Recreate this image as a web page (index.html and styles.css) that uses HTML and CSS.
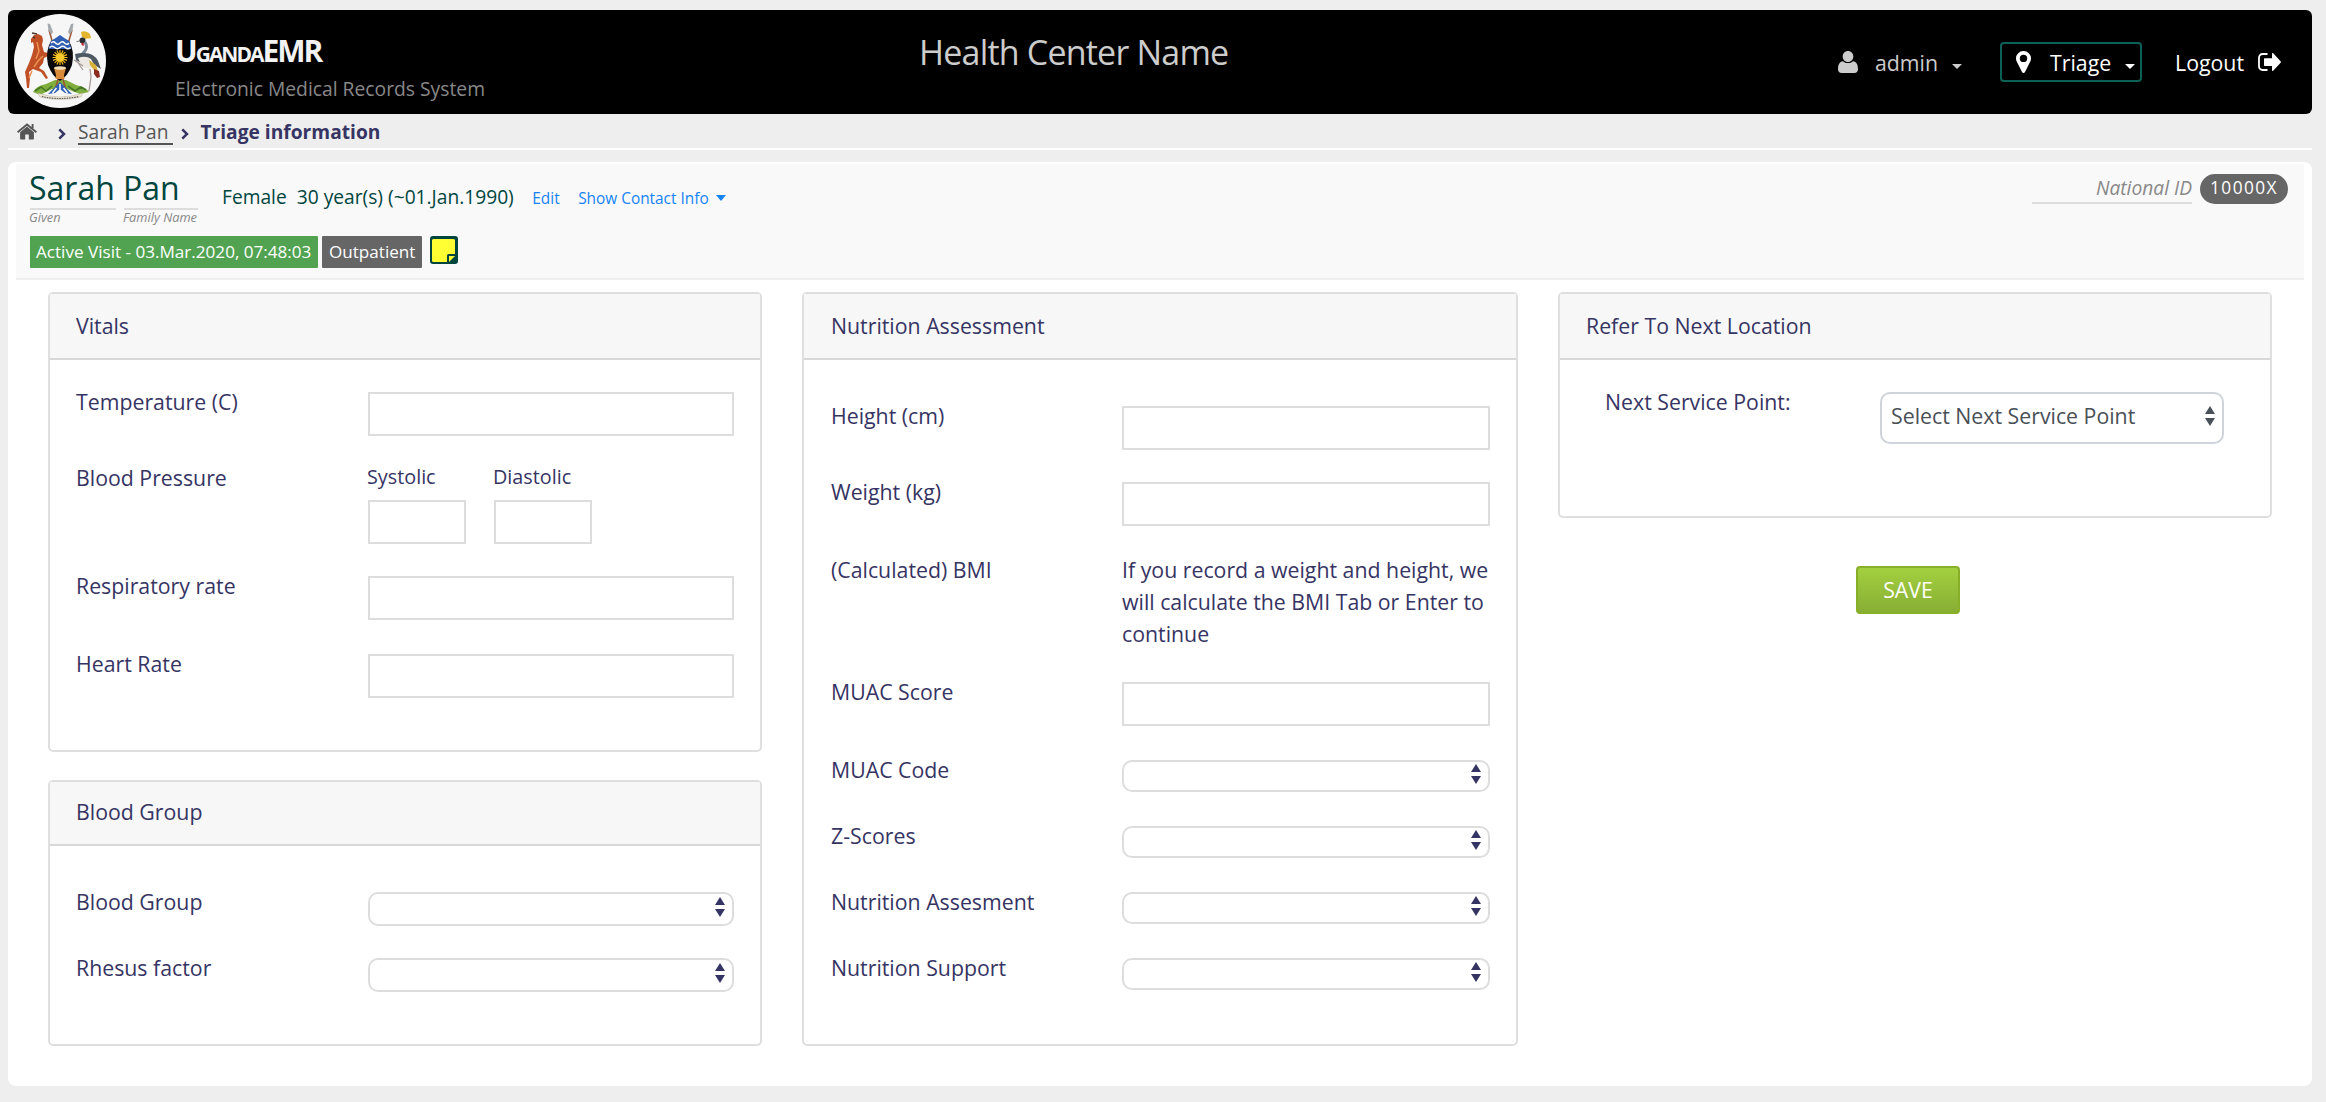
FILE: index.html
```html
<!DOCTYPE html>
<html lang="en">
<head>
<meta charset="utf-8">
<title>UgandaEMR - Triage</title>
<link rel="stylesheet" href="styles.css">
</head>
<body>
<header class="topbar">
  <svg class="crest" viewBox="0 0 92 94">
    <ellipse cx="46" cy="47" rx="46" ry="47" fill="#f6f6f6"/>
    <path d="M19 78q3-6 13-8l9-4h11l10 5q10 2 13 7l-9 2-13-5-7 1-8-1-12 6z" fill="#7fae3c"/>
    <path d="M21 77l6-4 5 4 6-5M54 72l7 5 6-4 5 3" stroke="#47762a" stroke-width="1.600" fill="none"/>
    <path d="M35 16l17 60M58 16L41 76" stroke="#9c5436" stroke-width="1.500"/>
    <path d="M33.500 9.500l2.500.500 3 8-1.500 2.500-3-4zM59.500 9.500l-2.500.500-3 8 1.500 2.500 3-4z" fill="#a4a9ad"/>
    <path d="M17 25l3-4 4-1 4 2 1 4-1 5 2 7 4 1 2-1v3l-6 3-1 5-4 5 5 3 4 7-2 1-5-7-8-3-4 3 1 6-1 10h-2l-1-10-1-6 4-9 3-8 2-8-1-5-2 1z" fill="#c04f26"/>
    <path d="M23 28l2 9-3 8M20 53l4-6 5-5M18 57l-3 7" stroke="#ec9150" stroke-width="1.500" fill="none"/>
    <path d="M18 19l5 1M19 23l2 1" stroke="#4b3a2c" stroke-width="1.400"/>
    <path d="M67 18q5-2 9 2l1 4-6 1-3-2z" fill="#e3b52e"/>
    <path d="M62.500 27.500l3-.500" stroke="#777" stroke-width="1"/>
    <circle cx="68.500" cy="26.500" r="3" fill="#2a2d31"/>
    <path d="M67.500 28.500l2.500 1-.5 2.500-2-1z" fill="#c4202a"/>
    <path d="M71 28q3 5 0 9t-6 6" stroke="#7a8795" stroke-width="3" fill="none"/>
    <path d="M61 40q4-1 9-1 10 0 14 8l3 8-5-3-8-5-7 2-5-3z" fill="#4d5862"/>
    <path d="M64 44q8-3 13 1l4 7-5 3-8-2z" fill="#ece9e2"/>
    <path d="M75 46l7 5 2 6-4-1-4-5z" fill="#d8b03a"/>
    <path d="M80 55l5 2 1 6-3 1-3-4z" fill="#8a2b20"/>
    <path d="M76 55l1 8-2 14M69 52l-9-6M62 46l7 10" stroke="#a79c96" stroke-width="1.300" fill="none"/>
    <path d="M46 22q4 3 9 5 6 10 3 24-4 11-12 16-8-5-12-16-3-14 3-24 5-2 9-5z" fill="#0a0a0a"/>
    <path d="M46 21q4 3 9 6l2.500 8h-23L37 27q5-3 9-6z" fill="#2f5fb3"/>
    <path d="M37 29q2.200-2.500 4.500 0t4.500 0 4.500 0 4.500 0M35.500 33.500q2.600-2.500 5.200 0t5.300 0 5.300 0 5.200 0" stroke="#fff" stroke-width="1.500" fill="none"/>
    <g stroke="#f5b81c" stroke-width="1.200"><path d="M46 36v15M38.500 43.500h15M40.700 38.200l10.600 10.600M51.300 38.200L40.700 48.800M43 36.600l6 13.800M49 36.600l-6 13.800M39 40.600l14 5.800M53 40.600l-14 5.800"/></g>
    <circle cx="46" cy="43.500" r="4.200" fill="#f8c92e"/>
    <path d="M40 54q6-2 12 0l-2 7 .5 4h-9l.5-4z" fill="#d98b3a"/>
    <ellipse cx="46" cy="54" rx="6" ry="1.800" fill="#f1dfba"/>
    <path d="M46 68l-12 12 7-1 5-4 5 4 7 1z" fill="#2f5fb3"/>
    <path d="M46 70v8M42.500 74l-4 5M49.500 74l4 5" stroke="#fff" stroke-width="1.500"/>
    <path d="M24 79q22 8 45 0l-2 4q-21 5-41 0z" fill="#ece6d2" stroke="#b5ae9c" stroke-width=".5"/>
    <path d="M28 82.500q17 4 37 0" stroke="#555" stroke-width="1.100" stroke-dasharray="1.500 1" fill="none"/>
  </svg>
  <div class="brand">
    <div class="brand-name">UgandaEMR</div>
    <div class="brand-sub">Electronic Medical Records System</div>
  </div>
  <h1 class="center-name">Health Center Name</h1>
  <nav class="user-nav">
    <a class="nav-item nav-user">
      <svg class="ico-user" viewBox="0 0 20 22"><path d="M10 0c3 0 5.300 2.400 5.300 5.500S13 11 10 11 4.700 8.600 4.700 5.500 7 0 10 0zM5 10.200c1.300 1.200 3 1.900 5 1.900s3.700-.7 5-1.900c3.500.3 5 3.500 5 8 0 2.400-1.400 3.800-3.700 3.800H3.700C1.400 22 0 20.600 0 18.200c0-4.500 1.500-7.700 5-8z" fill="currentColor"/></svg>
      <span class="user-label">admin</span><i class="caret"></i>
    </a>
    <a class="nav-item nav-place">
      <svg class="ico-pin" viewBox="0 0 15 22"><path fill-rule="evenodd" d="M7.500 0A7.400 7.400 0 0 1 15 7.500c0 1-.2 2-.6 2.800L9 21c-.6 1.300-2.400 1.300-3 0L.6 10.300C.2 9.500 0 8.500 0 7.500A7.400 7.400 0 0 1 7.500 0zm0 3.700a3.700 3.700 0 1 0 0 7.400 3.700 3.700 0 0 0 0-7.400z" fill="currentColor"/></svg>
      <span class="place-label">Triage</span><i class="caret"></i>
    </a>
    <a class="nav-item nav-logout"><span>Logout</span>
      <svg class="ico-out" viewBox="0 0 23 19"><path d="M9.500 1H4.500A3.500 3.500 0 0 0 1 4.500v9A3.500 3.500 0 0 0 4.500 17h5" fill="none" stroke="currentColor" stroke-width="1.800"/><path d="M14 .8c0-.8.700-1 1.200-.500l7.400 8c.4.500.4 1 0 1.500l-7.400 8c-.5.500-1.200.300-1.200-.500v-4.300H7c-.6 0-1-.4-1-1V6.200c0-.6.400-1 1-1h7z" fill="currentColor"/></svg>
    </a>
  </nav>
</header>

<nav class="crumbs">
  <svg class="ico-home" viewBox="0 0 20 17"><path d="M10 3.600l6.900 5.700v6.400c0 .5-.3.800-.8.800h-4.300v-5H8.200v5H3.900c-.5 0-.8-.3-.8-.8V9.300z" fill="#555"/><path d="M.6 9.200L10 1.400l9.400 7.800M15.600 1v4" fill="none" stroke="#555" stroke-width="1.900"/></svg>
  <svg class="ico-chev" viewBox="0 0 8 12"><path d="M1.300 1.300L6 6l-4.700 4.700" fill="none" stroke="#363463" stroke-width="2.500"/></svg>
  <a class="crumb-link">Sarah Pan&nbsp;</a>
  <svg class="ico-chev second" viewBox="0 0 8 12"><path d="M1.300 1.300L6 6l-4.700 4.700" fill="none" stroke="#363463" stroke-width="2.500"/></svg>
  <strong class="crumb-current">Triage information</strong>
</nav>

<main class="content">
  <section class="patient">
    <div class="patient-top">
      <div class="name given"><span class="name-value">Sarah</span><em>Given</em></div>
      <div class="name family"><span class="name-value">Pan</span><em>Family Name</em></div>
      <div class="demographics">
        <span class="gender">Female</span><span class="age">30 year(s) (~01.Jan.1990)</span><a class="edit">Edit</a><a class="contact">Show Contact Info</a><i class="caret-blue"></i>
      </div>
      <div class="identifiers"><em class="nid">National ID</em><span class="pid">10000X</span></div>
    </div>
    <div class="tags">
      <span class="tag visit">Active Visit - 03.Mar.2020, 07:48:03</span>
      <span class="tag type">Outpatient</span>
      <svg class="ico-note" viewBox="0 0 28 28"><rect width="28" height="28" rx="3" fill="#00463f"/><path d="M3.500 3h20a1.500 1.500 0 0 1 1.500 1.500V18h-6.500a1.500 1.500 0 0 0-1.500 1.500V26H3.500A1.500 1.500 0 0 1 2 24.500v-20A1.500 1.500 0 0 1 3.500 3z" fill="#ff3"/><path d="M19 20h6l-6 6z" fill="#ff3"/></svg>
    </div>
  </section>

  <div class="columns">
    <div class="column">
      <section class="card vitals">
        <h2>Vitals</h2>
        <div class="row"><label>Temperature (C)</label><input class="text"></div>
        <div class="row bp"><label>Blood Pressure</label>
          <div class="pair"><span>Systolic</span><input class="text"></div>
          <div class="pair"><span>Diastolic</span><input class="text"></div>
        </div>
        <div class="row resp"><label>Respiratory rate</label><input class="text"></div>
        <div class="row"><label>Heart Rate</label><input class="text"></div>
      </section>
      <section class="card blood">
        <h2>Blood Group</h2>
        <div class="row pick"><label>Blood Group</label><div class="select"><i class="arrows"></i></div></div>
        <div class="row pick"><label>Rhesus factor</label><div class="select"><i class="arrows"></i></div></div>
      </section>
    </div>

    <div class="column">
      <section class="card nutrition">
        <h2>Nutrition Assessment</h2>
        <div class="row height"><label>Height (cm)</label><input class="text"></div>
        <div class="row weight"><label>Weight (kg)</label><input class="text"></div>
        <div class="row bmi"><label>(Calculated) BMI</label><p>If you record a weight and height, we will calculate the BMI Tab or Enter to continue</p></div>
        <div class="row"><label>MUAC Score</label><input class="text"></div>
        <div class="row pick"><label>MUAC Code</label><div class="select"><i class="arrows"></i></div></div>
        <div class="row pick"><label>Z-Scores</label><div class="select"><i class="arrows"></i></div></div>
        <div class="row pick"><label>Nutrition Assesment</label><div class="select"><i class="arrows"></i></div></div>
        <div class="row pick"><label>Nutrition Support</label><div class="select"><i class="arrows"></i></div></div>
      </section>
    </div>

    <div class="column">
      <section class="card refer">
        <h2>Refer To Next Location</h2>
        <div class="row"><label>Next Service Point:</label><div class="select big"><span>Select Next Service Point</span><i class="arrows"></i></div></div>
      </section>
      <button class="save">SAVE</button>
    </div>
  </div>
</main>
</body>
</html>
```
FILE: styles.css
```css
* { box-sizing: border-box; }
body {
  margin: 0;
  padding: 10px 14px 16px 8px;
  height: 1102px;
  background: #eee;
  color: #363463;
  font: 21.3px/32px "Open Sans", sans-serif;
}
svg { display: block; flex: none; }

/* Top bar */
.topbar {
  display: flex;
  align-items: flex-start;
  height: 104px;
  background: #000;
  border-radius: 6px;
  padding-left: 6px;
}
.crest { width: 92px; height: 94px; margin-top: 4px; }
.brand { width: 743px; padding: 23px 0 0 69px; white-space: nowrap; }
.brand-name {
  font: bold 30px/36px "Open Sans", sans-serif;
  font-variant: small-caps;
  color: #f2f2f2;
  letter-spacing: -2px;
}
.brand-sub { font-size: 19.3px; line-height: 26px; color: #888; margin-top: 7px; }
.center-name {
  margin: 19px 0 0 70px;
  font: 500 34px/46px "Open Sans", sans-serif;
  letter-spacing: -.8px;
  color: #ccc;
  white-space: nowrap;
}
.user-nav { display: flex; margin: 32px 31px 0 auto; color: #fff; }
.nav-item { display: flex; align-items: center; height: 40px; }
.nav-item span { padding-top: 2px; }
.nav-user { color: #ccc; margin-right: 38px; }
.ico-user { width: 20px; height: 22px; margin-right: 17px; }
.ico-pin { width: 15px; height: 22px; margin-right: 19px; }
.ico-out { width: 23px; height: 19px; margin-left: 14px; }
.caret {
  border: 5px solid transparent;
  border-top-color: currentColor;
  border-bottom: 0;
  margin: 9px 0 0 14px;
}
.nav-place {
  width: 142px;
  border: 2px solid #0b6158;
  border-radius: 4px;
  padding-left: 14px;
  margin-right: 33px;
}

/* Breadcrumbs */
.crumbs {
  display: flex;
  align-items: center;
  height: 36px;
  border-bottom: 2px solid #fff;
  padding: 2px 0 0 9px;
  font-size: 19.2px;
}
.ico-home { width: 20px; height: 17px; margin-top: -2px; }
.ico-chev { width: 8px; height: 12px; margin: 4px 12px 0 21px; }
.ico-chev.second { margin: 4px 11px 0 8px; }
.crumb-link { color: #555; border-bottom: 2px solid #555; line-height: 22px; margin-top: 2px; }

/* Patient header */
.content {
  height: 924px;
  margin-top: 12px;
  padding: 2px 8px 0;
  background: #fff;
  border-radius: 8px;
}
.patient {
  height: 116px;
  background: #f9f9f9;
  border-bottom: 2px solid #eee;
  padding-left: 14px;
  color: #00463f;
}
.patient-top { display: flex; height: 72px; white-space: nowrap; }
.name { display: flex; flex-direction: column; }
.given { width: 86px; margin-right: 8px; }
.family { width: 74px; }
.name-value { font-size: 32px; line-height: 48px; height: 46px; border-bottom: 2px solid #ddd; text-indent: -1px; }
.name em { font-size: 12.8px; line-height: 15px; color: #888; text-indent: -1px; }
.demographics { display: flex; align-items: baseline; height: 40px; margin: 17px 0 0 24px; line-height: 32px; font-size: 19.2px; }
.age { margin-left: 10px; }
.edit, .contact { font-size: 15.4px; color: #1583f6; margin-left: 18.500px; }
.caret-blue { border: 5.500px solid transparent; border-top: 6px solid #1583f6; border-bottom: 0; margin-left: 7px; transform: translateY(-3px); }
.identifiers { display: flex; align-items: flex-start; margin: 10px 16px 0 auto; }
.nid { width: 160px; height: 30px; line-height: 27px; border-bottom: 2px solid #ddd; text-align: right; font-size: 19.2px; color: #888; }
.pid {
  width: 88px;
  height: 30px;
  margin-left: 8px;
  border-radius: 15px;
  background: #666;
  color: #fff;
  font-size: 17.300px;
  line-height: 28px;
  letter-spacing: 1.400px;
  text-align: center;
}
.tags { display: flex; gap: 4px; }
.tag { height: 32px; line-height: 31px; padding: 0 6px; color: #fff; font-size: 17.100px; white-space: nowrap; border-radius: 1px; }
.visit { width: 288px; background: #51a351; }
.type { width: 100px; background: #666; padding-left: 7px; }
.ico-note { width: 28px; height: 28px; margin-left: 4px; }

/* Form cards */
.columns { display: flex; gap: 40px; padding: 12px 32px 0; }
.column { width: 714px; }
.column:nth-child(2) { width: 716px; }
.card { border: 2px solid #dfdfdf; border-radius: 5px; }
.card h2 {
  margin: 0;
  height: 66px;
  padding: 16px 26px 0;
  background: #f7f7f7;
  border-bottom: 2px solid #d8d8d8;
  font: inherit;
}
.row { display: flex; height: 44px; margin: 34px 26px 0; }
.row label { width: 292px; line-height: 20px; white-space: nowrap; }
.text { width: 366px; height: 44px; border: 2px solid #ddd; background: #fff; padding: 0; }
.select { position: relative; width: 366px; height: 34px; border: 2px solid #ddd; border-radius: 10px; }
.arrows { position: absolute; right: 7px; top: 3px; width: 10px; height: 20px; }
.arrows::before, .arrows::after { content: ""; position: absolute; left: 0; border: 5px solid transparent; }
.arrows::before { top: 0; border-top: 0; border-bottom: 8px solid currentColor; }
.arrows::after { top: 12px; border-bottom: 0; border-top: 8px solid currentColor; }

.vitals { height: 460px; margin-bottom: 28px; }
.vitals h2 + .row { margin-top: 32px; }
.vitals .bp { height: 76px; margin-top: 32px; }
.pair { width: 98px; margin-right: 28px; }
.pair span { display: block; font-size: 19.8px; line-height: 18px; height: 32px; text-indent: -1px; }
.pair .text { display: block; width: 98px; }
.vitals .resp { margin-top: 32px; }

.row.pick { height: 34px; margin-top: 32px; }
.blood { height: 266px; }
.blood h2 { height: 64px; padding-top: 14px; }
.blood h2 + .row.pick { margin-top: 46px; }

.nutrition { height: 754px; }
.nutrition h2 { padding-left: 27px; }
.nutrition .row label { width: 291px; }
.nutrition .row { margin-right: 0; margin-left: 27px; }
.nutrition .text, .nutrition .select { width: 368px; }
.nutrition .height { margin-top: 46px; }
.nutrition .weight { margin-top: 32px; }
.nutrition .bmi { height: 88px; }
.bmi p { width: 374px; margin: -6px 0 0; }
.nutrition .row.pick { height: 32px; margin-top: 34px; }
.nutrition .select { height: 32px; }
.nutrition .arrows { top: 2px; }

.refer { height: 226px; }
.refer .row { margin: 32px 45px 0; }
.refer .row label { width: 275px; }
.select.big { width: 344px; height: 52px; border-color: #ced4da; color: #495057; padding-left: 9px; line-height: 44px; white-space: nowrap; }
.big .arrows { right: 7px; top: 12px; }
.save {
  display: block;
  width: 104px;
  height: 48px;
  margin: 48px 0 0 298px;
  padding: 0;
  border: 2px solid #88af28;
  border-radius: 4px;
  background: linear-gradient(#a3d040, #88ae34);
  color: #fff;
  font: 21.300px/40px "Open Sans", sans-serif;
}
```
